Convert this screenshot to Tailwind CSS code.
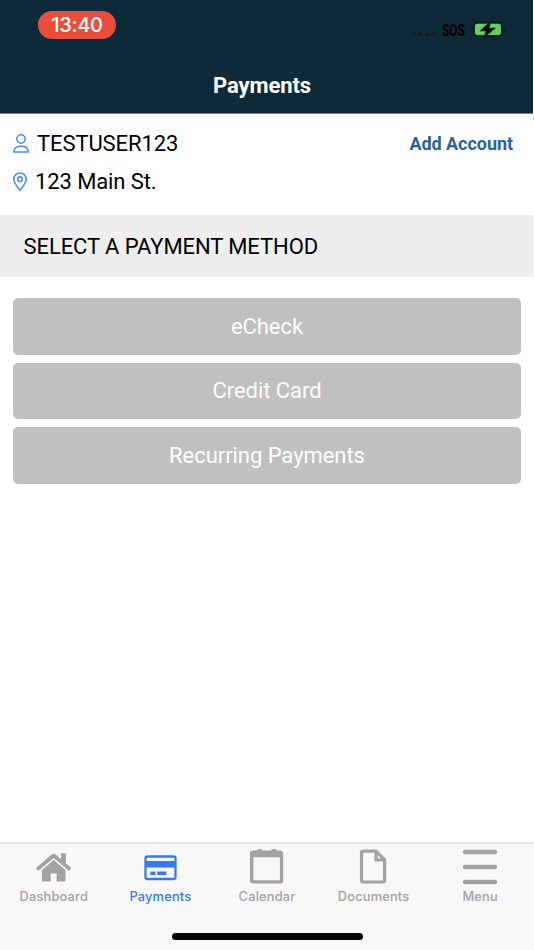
<!DOCTYPE html>
<html lang="en">
<head>
    <meta charset="UTF-8">
    <meta name="viewport" content="width=device-width, initial-scale=1.0">
    <title>Payments</title>
    <script src="https://cdn.jsdelivr.net/npm/@tailwindcss/browser@4"></script>
</head>
<body class="bg-white overflow-hidden font-['Roboto',sans-serif]">
    <div class="w-[534px] h-[950px] flex flex-col">
        <!-- Header -->
        <header class="w-[533px] h-[114px] shrink-0 bg-[#0e2937] border-b border-[#71818a] flex flex-col">
            <div class="flex justify-between pl-[38px] pr-[26px] pt-[11px]">
                <div class="w-[78px] h-7 rounded-full bg-[#eb4d3d] text-white text-[20px] leading-7 text-center tracking-[-.3px] font-medium font-['Inter',sans-serif]">13:40</div>
                <div class="flex items-center h-[38px]">
                    <svg class="w-[26px] h-5" viewBox="0 0 26 20" fill="#0a1f2a">
                        <circle cx="4" cy="14.5" r="2.2"/>
                        <circle cx="10.5" cy="14.5" r="2.2"/>
                        <circle cx="17" cy="14.5" r="2.2"/>
                        <circle cx="23.500" cy="14.5" r="2.2"/>
                    </svg>
                    <span class="w-[23px] ml-[6px] pt-px text-[16px] leading-5 font-bold text-black origin-left scale-x-[.74]">SOS</span>
                    <svg class="w-[35px] h-5 ml-[7px]" viewBox="0 0 35 20">
                        <rect x="1" y="2" width="29" height="14.500" rx="4.500" fill="none" stroke="#09202c" stroke-width="2"/>
                        <path d="M32 7c2.2.8 2.200 4 0 4.800z" fill="#09202c"/>
                        <rect x="3" y="3.700" width="26" height="11.300" rx="2.500" fill="#67ce67"/>
                        <path d="M18.200 2 9.300 10.500h5.400L12.200 17l10-8.600h-5.600z" fill="#000" stroke="#0b2019" stroke-width="1.500"/>
                    </svg>
                </div>
            </div>
            <h1 class="mt-[23px] pr-[9px] text-center text-[22px] leading-7 tracking-[-.1px] font-bold text-white">Payments</h1>
        </header>

        <!-- Account -->
        <section class="h-[101px] shrink-0 flex justify-between pl-[12px] pr-[21px] pt-[14px]">
            <div>
                <div class="flex items-center h-[30px]">
                    <svg class="w-[18px] h-5" viewBox="0 0 18 20" fill="none" stroke="#4791f7" stroke-width="1.600">
                        <circle cx="9" cy="6" r="4.200"/>
                        <path d="M1.800 19c0-3.700 2.700-5.900 7.200-5.900s7.200 2.200 7.200 5.900z" stroke-linejoin="round"/>
                    </svg>
                    <span class="ml-[7px] text-[22px] tracking-[-.1px] text-black">TESTUSER123</span>
                </div>
                <div class="flex items-center h-[30px] mt-2">
                    <svg class="w-4 h-5" viewBox="0 0 16 20" fill="none" stroke="#4791f7" stroke-width="1.600">
                        <path d="M8 19.200C5.500 15.900 1.700 11.900 1.700 8.300a6.300 6.300 0 0 1 12.600 0c0 3.600-3.800 7.600-6.300 10.900z" stroke-linejoin="round"/>
                        <circle cx="8" cy="8.200" r="2.300"/>
                    </svg>
                    <span class="ml-[7px] text-[22px] tracking-[-.1px] text-black">123 Main St.</span>
                </div>
            </div>
            <a class="pt-px text-[18px] leading-[30px] tracking-[-.05px] font-bold text-[#286398]">Add Account</a>
        </section>

        <h2 class="w-[533px] h-[62px] shrink-0 bg-[#eeeeee] pl-[23.500px] text-[22px] leading-[63px] tracking-[-.08px] text-black">SELECT A PAYMENT METHOD</h2>

        <!-- Payment methods -->
        <main class="flex-1 flex flex-col gap-2 px-[13px] pt-[21px]">
            <button class="h-[56.500px] rounded-[5px] bg-[#c0c0c0] text-[22px] tracking-[-.05px] text-white">eCheck</button>
            <button class="h-[56.500px] rounded-[5px] bg-[#c0c0c0] text-[22px] tracking-[-.05px] text-white">Credit Card</button>
            <button class="h-[56.500px] rounded-[5px] bg-[#c0c0c0] text-[22px] tracking-[-.05px] text-white">Recurring Payments</button>
        </main>

        <!-- Tab bar -->
        <footer class="h-[108px] shrink-0 bg-[#f8f8f8] border-t-2 border-[#e2e2e2] flex flex-col items-center">
            <nav class="w-[533px] grid grid-cols-5 pt-[5px] text-[12.800px] leading-[18px] tracking-[.2px] text-[#a2a2a2] font-medium font-['Inter',sans-serif]">
                <a class="flex flex-col items-center">
                    <svg class="w-9 h-9" viewBox="0 0 36 36" fill="#a2a2a2">
                        <path d="M17.700 11 5.900 21v10a1.500 1.500 0 0 0 1.500 1.500h7.300V24.500h6v8H28a1.500 1.500 0 0 0 1.500-1.500V21z"/>
                        <path d="M25 4.500h4.800v12l-4.800-4z"/>
                        <path d="M2.400 19.400 16.700 7.200q1-.8 2 0L33 19.400" fill="none" stroke="#f8f8f8" stroke-width="6.200" stroke-linecap="round" stroke-linejoin="round"/>
                        <path d="M2.400 19.400 16.700 7.200q1-.8 2 0L33 19.400" fill="none" stroke="#a2a2a2" stroke-width="3.800" stroke-linecap="round" stroke-linejoin="round"/>
                        <path d="M25 4.500h4.800v12l-4.800-4z"/>
                    </svg>
                    <span class="mt-[3px]">Dashboard</span>
                </a>
                <a class="flex flex-col items-center text-[#3478f6]">
                    <svg class="w-9 h-9" viewBox="0 0 36 36">
                        <rect x="3.500" y="7.500" width="30" height="22.500" rx="2" fill="none" stroke="#3478f6" stroke-width="2.300"/>
                        <path d="M3 12h30.500v6.500H3zM8.300 22.500h5.200V26H8.300zM15.300 22.500h9V26h-9z" fill="#3478f6"/>
                    </svg>
                    <span class="mt-[3px]">Payments</span>
                </a>
                <a class="flex flex-col items-center">
                    <svg class="w-9 h-9" viewBox="0 0 36 36" fill="#a2a2a2">
                        <path fill-rule="evenodd" d="M4 1.500h4V1q0-1 1-1h3q1 0 1 1v.5h9.500V1q0-1 1-1h3q1 0 1 1v.5h4q2.700 0 2.700 3V31.500q0 3-2.700 3H4q-3 0-3-3v-27q0-3 3-3zM4.400 8.200V30.500q0 .8.800.8h24.900q.8 0 .8-.8V8.200z"/>
                    </svg>
                    <span class="mt-[3px]">Calendar</span>
                </a>
                <a class="flex flex-col items-center">
                    <svg class="w-9 h-9" viewBox="0 0 36 36" fill="none" stroke="#a2a2a2" stroke-width="3.200">
                        <path d="M7.500 2.200H20L28.600 11v20a2 2 0 0 1-2 2H7.500a2 2 0 0 1-2-2v-26.800a2 2 0 0 1 2-2z"/>
                        <path d="M20 2.500v8.500h9"/>
                    </svg>
                    <span class="mt-[3px]">Documents</span>
                </a>
                <a class="flex flex-col items-center">
                    <svg class="w-9 h-9" viewBox="0 0 36 36" stroke="#a2a2a2" stroke-width="4.500" stroke-linecap="round">
                        <path d="M3 2.900h30M3 17.900h30M3 32.900h30"/>
                    </svg>
                    <span class="mt-[3px]">Menu</span>
                </a>
            </nav>
            <div class="mt-[27px] w-[191px] h-[7px] rounded-full bg-black"></div>
        </footer>
    </div>
</body>
</html>
